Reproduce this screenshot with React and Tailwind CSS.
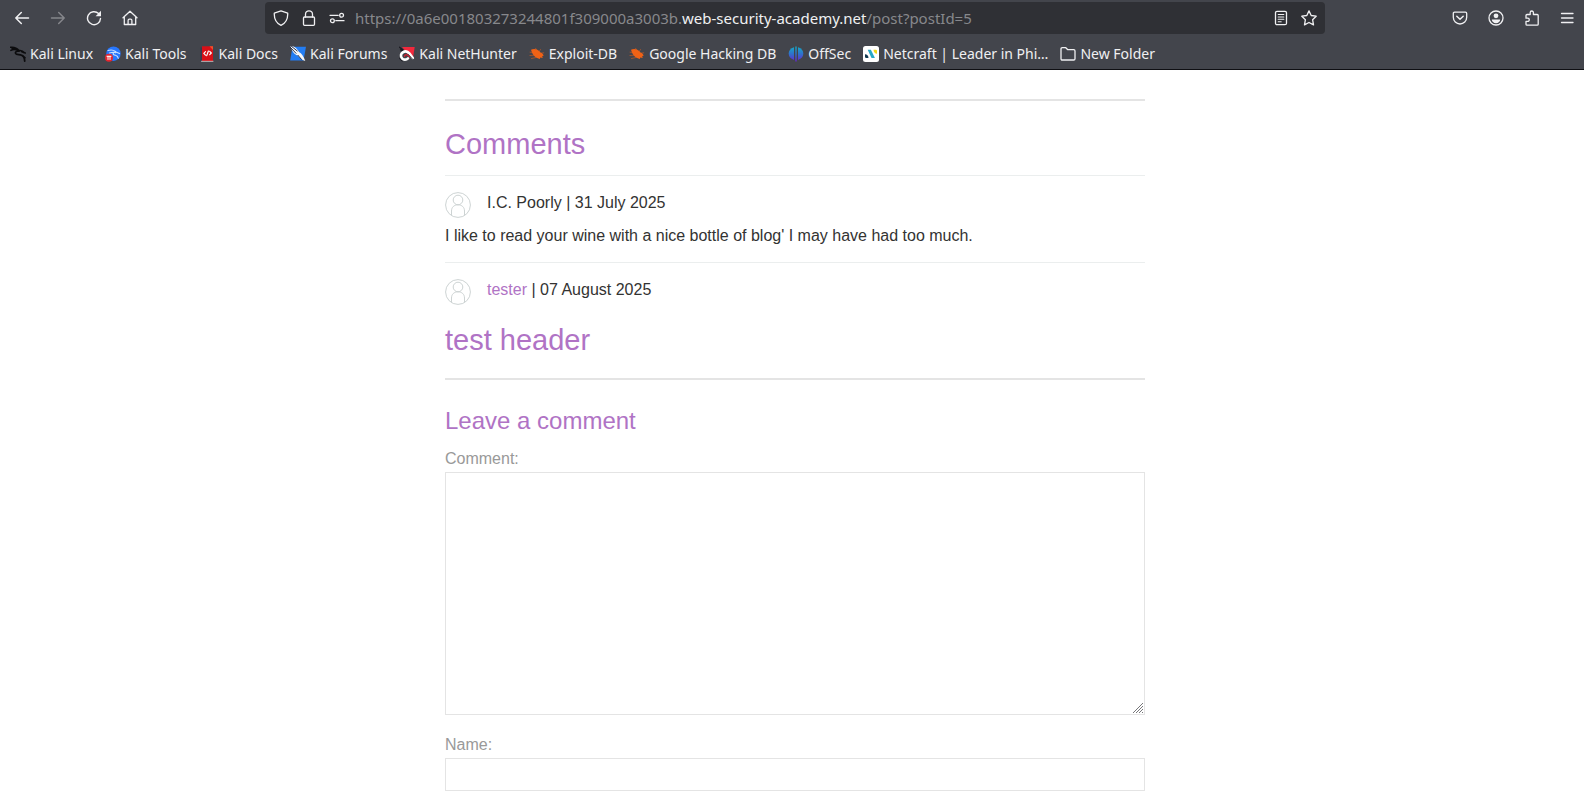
import React from "react";

function Icon({ children, className = "" }) {
  return (
    <svg
      viewBox="0 0 16 16"
      className={`size-4 shrink-0 ${className}`}
      fill="none"
      stroke="currentColor"
      strokeWidth="1.3"
      strokeLinecap="round"
      strokeLinejoin="round"
      aria-hidden="true"
    >
      {children}
    </svg>
  );
}

const Back = () => (
  <Icon><path d="M14.5 8H1.8M7.3 2.5 1.8 8l5.5 5.5" strokeWidth="1.5" /></Icon>
);
const Forward = () => (
  <Icon><path d="M1.500 8h12.700M8.700 2.500 14.200 8l-5.500 5.500" strokeWidth="1.500" /></Icon>
);
const Reload = () => (
  <Icon>
    <path d="M14.500 8.500A6.500 6.500 0 1 1 12.600 3.600" strokeWidth="1.400" />
    <path d="M15 .8v5.400H9.600z" fill="currentColor" stroke="none" />
  </Icon>
);
const Home = () => (
  <Icon>
    <path d="M1 7.700 8 1.200l7 6.500M2.300 6.800v7.700h11.400V6.800" />
    <path d="M6.100 14.300V10.500q0-1.300 1.300-1.300h1.200q1.300 0 1.300 1.300v3.800" />
  </Icon>
);
const Shield = () => (
  <Icon><path d="M8 .9 1.300 3.200c-.3 5.600 2.200 10 6.700 12.200 4.500-2.200 7-6.600 6.700-12.200z" /></Icon>
);
const Lock = () => (
  <Icon>
    <rect x="2.500" y="7" width="11" height="8.300" rx="1" />
    <path d="M4.500 7V4.300a3.500 3.500 0 0 1 7 0V7" />
  </Icon>
);
const Permissions = () => (
  <Icon>
    <circle cx="12.600" cy="5.300" r="1.900" />
    <circle cx="3.400" cy="10.700" r="1.900" />
    <path d="M1 5.300h8.200M6.800 10.700H15" />
  </Icon>
);
const Reader = () => (
  <Icon>
    <rect x="2.500" y="1.300" width="11" height="13.400" rx="1.500" />
    <path d="M5.200 4.500h5.600M5.200 7h5.600M5.200 9.200h5.600M5.200 11.700h3" strokeWidth="1.100" />
  </Icon>
);
const Star = () => (
  <Icon><path d="m8 .9 2.200 4.600 5 .7-3.600 3.500.9 5.200L8 12.500l-4.500 2.400.9-5.200L.8 6.200l5-.7z" /></Icon>
);
const Pocket = () => (
  <Icon>
    <path d="M2.600 2.200h10.800q1.300 0 1.300 1.300v3.800a6.700 6.700 0 0 1-13.400 0V3.500q0-1.300 1.300-1.300z" />
    <path d="M4.800 6.300 8 9.300l3.200-3" strokeWidth="1.500" />
  </Icon>
);
const Account = () => (
  <Icon>
    <circle cx="8" cy="8" r="7" />
    <circle cx="8" cy="5.800" r="2.400" fill="currentColor" stroke="none" />
    <path d="M3.800 9.500h8.400c0 2-1.800 3.700-4.200 3.700S3.800 11.500 3.800 9.500z" fill="currentColor" stroke="none" />
  </Icon>
);
const Puzzle = () => (
  <Icon>
    <path d="M6.200 4.500V2.600a1.600 1.600 0 0 1 3.200 0v1.900h3.800q1 0 1 1v8.700q0 1-1 1H3q-1 0-1-1v-2.800h1.700a1.600 1.600 0 0 0 0-3.200H2V5.500q0-1 1-1z" />
  </Icon>
);
const Menu = () => (
  <Icon><path d="M2.500 3.500h11.500M2.500 8h11.500M2.500 12.500h11.500" /></Icon>
);

const KaliLinux = () => (
  <Icon className="text-[#0c0c0e]">
    <path d="M.5 1.300C4 .9 7 2 9 4.600M.9 4.400C3.500 2.800 6 3.200 9 5M2 2.700l4.500.6" strokeWidth="1.500" />
    <path d="M9 4.800C6.500 5 5 6 5.600 7.300c.8 1.600 3.800 1 6 2 2.200 1 3 2.600 3.100 5.700" strokeWidth="1.800" />
    <path d="M9 4.500c2-.4 3.800.2 5.500 2.200l.9.300M11.500 5.500l2.300 1.200M12.500 9.500l2.600 2.300" strokeWidth="1.500" />
  </Icon>
);
const KaliTools = () => (
  <Icon>
    <circle cx="8.500" cy="7.700" r="7.200" fill="#2777ff" stroke="none" />
    <path d="M3 4.500c3-.8 5.600-.5 7.500 1M4.500 7c2.500-1 4.500-.8 6.300-.4M9 6.300c-2 1.700 0 2.700 1.500 3 1.700.4 2.500 1.200 2.800 3M11 6l3.500 1.600" stroke="#c9dfff" strokeWidth="1.100" />
    <circle cx="4" cy="11.700" r="4" fill="#e3262f" stroke="none" />
    <path d="M2 10.300h4M3 10.300v3.200M5 10.300v3.200" stroke="#fff" strokeWidth="1" />
  </Icon>
);
const KaliDocs = () => (
  <Icon>
    <path d="M1.500 1.500h2V15h-2z" fill="#37384c" stroke="none" />
    <path d="M3 .3h11V15H3z" fill="#d80f17" stroke="none" />
    <path d="M10.500.3H14V4z" fill="#f0522b" stroke="none" />
    <path d="M2.500 15.300h11.500" stroke="#d4c9c8" strokeWidth=".9" />
    <path d="m6.500 5.700-1.700 1.700L6.500 9.100M10.700 5.300l1.600 1.700-1.600 1.700M9.400 5 7.700 9.600" stroke="#fff" strokeWidth="1.200" />
  </Icon>
);
const KaliForums = () => (
  <Icon>
    <path d="M2.500.7H16L13.500 14.500H.2z" fill="#237df3" stroke="none" />
    <path d="M.3.3 3.500.6C6 2 7.500 3.700 9 6c2.700 1.500 4.500 4 6.300 9-3.800-1.200-6-3.300-7.600-5.500C4 8.500 2.500 5.500.3.3z" fill="#f5f7fa" stroke="none" />
    <path d="M.5 1.500 6 7.300M1.500.4l5.700 4.500M8 9.300l3.400 4" stroke="#18233a" strokeWidth=".9" />
  </Icon>
);
const NetHunter = () => (
  <Icon>
    <path d="M3 .9h12.700L13.800 13 8 7z" fill="#f1283c" stroke="none" />
    <path d="M.5 1.200 4 4M1.500 3.800l2 1.200M.8 12.500l2.500 2.300" stroke="#1c1b22" strokeWidth="1.200" />
    <path d="M9 12.300c-1.700 1.700-4.500 1.800-6 0-1.700-2-1.200-4.700.8-6C6 4.900 8.700 5.300 10.300 7.400l3.500 4.600" stroke="#fff" strokeWidth="2.600" />
    <path d="M5.500 10.500c0-1.500 1.500-2.300 2.800-1.500l2.500 2" stroke="#d5202f" strokeWidth="1.200" />
    <path d="m9.500 8.500 4.300 4.800" stroke="#1c1b22" strokeWidth=".7" />
  </Icon>
);
const Bug = () => (
  <Icon className="text-[#ef6216]">
    <path d="M2 3.800C5 2.200 9.500 3.300 11.500 6.500c1.700.6 2.700 1.800 3.200 3.200l-1.500.3.500 2-2.500-.4-.3 1.300C7 12.600 3.500 9.500 2 3.800z" fill="currentColor" stroke="none" />
    <path d="M2.500 6.500 1 6.200M5 9.300.9 9.500M7 11.500 2.500 12.500M8 4 6.500 2.300M10.200 5.500l1.300-2M12 7.200l2.700-.4" strokeWidth=".7" opacity=".7" />
  </Icon>
);
const OffSec = () => (
  <Icon>
    <defs>
      <linearGradient id="offsec-fill" gradientUnits="userSpaceOnUse" x1="0" y1="0" x2="0" y2="16">
        <stop offset="0" stopColor="#12b0c6" />
        <stop offset=".5" stopColor="#3070cc" />
        <stop offset="1" stopColor="#6a1fd0" />
      </linearGradient>
    </defs>
    <g fill="url(#offsec-fill)" stroke="none">
      <path d="M6 1.200V14C2.500 12.800.7 10.700.7 7.600S2.500 2.300 6 1.200z" />
      <path d="M10 1.200V14c3.500-1.200 5.300-3.300 5.300-6.400S13.500 2.300 10 1.200z" />
      <path d="M7.300.4h1.400V15.500H7.300z" />
    </g>
  </Icon>
);
const Netcraft = () => (
  <Icon>
    <rect width="16" height="16" rx="2.500" fill="#fff" stroke="none" />
    <path d="M4.700 3.800h3.200l4 8.200H8.500z" fill="#27a7c6" stroke="none" />
    <path d="M2 8.300c2 0 3.500 1.500 3.500 3.700H3.200Q2 12 2 10.800z" fill="#123a52" stroke="none" />
    <path d="M14 7.700c-2 0-3.500-1.500-3.500-3.900h2.300q1.200 0 1.200 1.200z" fill="#f0d817" stroke="none" />
  </Icon>
);
const Folder = () => (
  <Icon><path d="M1 3q0-1.300 1.300-1.300h3.500l2 2h5.900Q15 3.700 15 5v7.700q0 1.300-1.300 1.300H2.300Q1 14 1 12.700z" /></Icon>
);

const bookmarks = [
  ["Kali Linux", KaliLinux],
  ["Kali Tools", KaliTools],
  ["Kali Docs", KaliDocs],
  ["Kali Forums", KaliForums],
  ["Kali NetHunter", NetHunter],
  ["Exploit-DB", Bug],
  ["Google Hacking DB", Bug],
  ["OffSec", OffSec],
  ["Netcraft | Leader in Phi…", Netcraft],
];

function ToolButton({ label, icon: Glyph, className = "w-9" }) {
  return (
    <button type="button" aria-label={label} className={`flex h-9 items-center justify-center ${className}`}>
      <Glyph />
    </button>
  );
}

function BrowserChrome() {
  return (
    <header className="border-b border-[#0f0f13] bg-[#43454c] font-['Noto_Sans',sans-serif] text-[#f0f0f2]">
      <div className="flex h-9 items-center pl-1">
        <ToolButton label="Back" icon={Back} />
        <ToolButton label="Forward" icon={Forward} className="w-9 text-[#85868b]" />
        <ToolButton label="Reload" icon={Reload} />
        <ToolButton label="Home" icon={Home} />
        <div className="mx-[117px] flex h-8 min-w-0 flex-1 items-center rounded bg-[#2f3035]">
          <ToolButton label="Tracking protection" icon={Shield} className="ml-0.5 w-7" />
          <ToolButton label="Connection security" icon={Lock} className="w-7" />
          <ToolButton label="Permissions" icon={Permissions} className="w-7" />
          <div className="ml-1 min-w-0 flex-1 overflow-hidden text-[15px] leading-8 whitespace-nowrap text-[#87888c]">
            https://0a6e001803273244801f309000a3003b.
            <span className="text-[#f0f0f2]">web-security-academy.net</span>
            /post?postId=5
          </div>
          <ToolButton label="Reader view" icon={Reader} className="w-7" />
          <ToolButton label="Bookmark this page" icon={Star} className="mr-0.5 w-7" />
        </div>
        <ToolButton label="Save to Pocket" icon={Pocket} />
        <ToolButton label="Account" icon={Account} />
        <ToolButton label="Extensions" icon={Puzzle} />
        <ToolButton label="Application menu" icon={Menu} className="w-[34px]" />
      </div>
      <nav aria-label="Bookmarks" className="flex h-[33px] items-center gap-3 overflow-hidden pt-0.5 pl-2.5 text-[14px] leading-5 whitespace-nowrap">
        {bookmarks.map(([name, Glyph]) => (
          <a key={name} href="#" className="flex items-center gap-1">
            <Glyph />
            {name}
          </a>
        ))}
        <button type="button" className="flex items-center gap-1">
          <Folder />
          New Folder
        </button>
      </nav>
    </header>
  );
}

function Avatar() {
  return (
    <svg viewBox="0 0 26 26" className="size-[26px] shrink-0" fill="none" stroke="#cdd3d3" strokeWidth="1" aria-hidden="true">
      <circle cx="13" cy="13" r="12.400" />
      <circle cx="13" cy="8" r="4.800" />
      <path d="M6.500 23.500V19c0-3.700 2.600-6.200 6.500-6.200s6.500 2.500 6.500 6.200v4.500" />
    </svg>
  );
}

function Comment({ author, date, children }) {
  return (
    <section className="border-t border-[#ebeeee] pt-4">
      <div className="flex gap-4">
        <Avatar />
        <p className="leading-[22px]">
          {author} | {date}
        </p>
      </div>
      {children}
    </section>
  );
}

function ResizeGrip() {
  return (
    <svg viewBox="0 0 12 12" className="pointer-events-none absolute right-px bottom-px size-3" stroke="#77777a" strokeWidth="1" aria-hidden="true">
      <path d="M0 0h12v12H0z" fill="#fff" stroke="none" />
      <path d="M1 11 11 1M4 11l7-7M7 11l4-4M10 11l1-1" fill="none" />
    </svg>
  );
}

export default function App() {
  return (
    <div className="min-h-screen bg-white">
      <BrowserChrome />
      <main className="pl-1.5 font-['Liberation_Sans',Arial,sans-serif] text-base text-[#333332]">
        <div className="mx-auto max-w-[700px] pt-[29px]">
          <hr className="border-t-2 border-[#e4e4e4]" />
          <h1 className="pt-[26px] pb-3.5 text-[29px] leading-[34px] text-[#b073c5]">Comments</h1>
          <Comment author="I.C. Poorly" date="31 July 2025">
            <p className="pt-1.5 pb-3.5 leading-6">
              I like to read your wine with a nice bottle of blog' I may have had too much.
            </p>
          </Comment>
          <Comment author={<a href="#" className="text-[#b073c5]">tester</a>} date="07 August 2025">
            <h1 className="pt-[18px] pb-[21px] text-[29px] leading-[34px] text-[#b073c5]">test header</h1>
          </Comment>
          <hr className="border-t-2 border-[#e4e4e4]" />
          <form onSubmit={(e) => e.preventDefault()}>
            <h2 className="pt-[23px] pb-2.5 text-2xl leading-9 text-[#b073c5]">Leave a comment</h2>
            <label htmlFor="comment" className="block pb-[3px] leading-5 text-[#999999]">Comment:</label>
            <div className="relative">
              <textarea id="comment" className="block h-[243px] w-full resize-y border border-[#e4e4e4] bg-white px-3 py-2" />
              <ResizeGrip />
            </div>
            <label htmlFor="name" className="block pt-5 pb-[3px] leading-5 text-[#999999]">Name:</label>
            <input id="name" type="text" className="block h-[33px] w-full border border-[#e4e4e4] bg-white px-3" />
          </form>
        </div>
      </main>
    </div>
  );
}
